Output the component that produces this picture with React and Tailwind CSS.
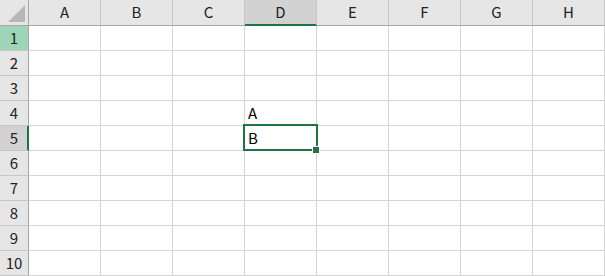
import React from "react";

const cols = ["A", "B", "C", "D", "E", "F", "G", "H"];
const rows = [1, 2, 3, 4, 5, 6, 7, 8, 9, 10];

const cellText = { "D4": "A", "D5": "B" };

const App = () => {
  return (
    <div
      className="w-[605px] h-[276px] overflow-hidden bg-white text-[#222]"
      style={{ fontFamily: '"Noto Sans CJK JP", "Liberation Sans", sans-serif' }}
    >
      <div className="grid grid-cols-[29px_repeat(8,72px)] grid-rows-[26px_repeat(10,25px)]">
        {/* corner */}
        <div className="relative bg-[#e6e6e6] border-r border-b border-[#a6a6a6]">
          <svg width="28" height="25" className="absolute left-0 top-0">
            <polygon points="25,5 25,22 8,22" fill="#b6b6b6" />
          </svg>
        </div>
        {cols.map((c) => (
          <div
            key={c}
            className={
              c === "D"
                ? "flex items-center justify-center bg-[#d2d2d2] border-r border-[#c6c6c6] border-b-2 border-b-[#217346] text-[15px] pt-[1px]"
                : "flex items-center justify-center bg-[#e6e6e6] border-r border-[#c6c6c6] border-b border-b-[#a6a6a6] text-[15px] pb-[1px]"
            }
          >
            {c}
          </div>
        ))}

        {rows.map((r) => (
          <React.Fragment key={r}>
            <div
              className={
                r === 1
                  ? "flex items-center justify-center bg-[#9fd5b7] border-r border-r-[#a6a6a6] border-b border-b-[#c6c6c6] text-[15px]"
                  : r === 5
                  ? "flex items-center justify-center bg-[#d2d2d2] border-r-2 border-r-[#217346] border-b border-b-[#c6c6c6] text-[15px] pl-[1px]"
                  : "flex items-center justify-center bg-[#e6e6e6] border-r border-r-[#a6a6a6] border-b border-b-[#c6c6c6] text-[15px]"
              }
            >
              {r}
            </div>
            {cols.map((c) => {
              const key = c + r;
              const selected = key === "D5";
              return (
                <div
                  key={key}
                  className="relative flex items-center border-r border-b border-[#d4d4d4] pl-[3px] text-[15px] text-black"
                >
                  {cellText[key]}
                  {selected && (
                    <>
                      <div className="absolute -left-[2px] -top-[2px] w-[75px] h-[27px] border-2 border-[#217346]" />
                      <div className="absolute left-[67px] top-[20px] w-[8px] h-[8px] bg-[#217346] border border-white z-10" />
                    </>
                  )}
                </div>
              );
            })}
          </React.Fragment>
        ))}
      </div>
    </div>
  );
};

export default App;
